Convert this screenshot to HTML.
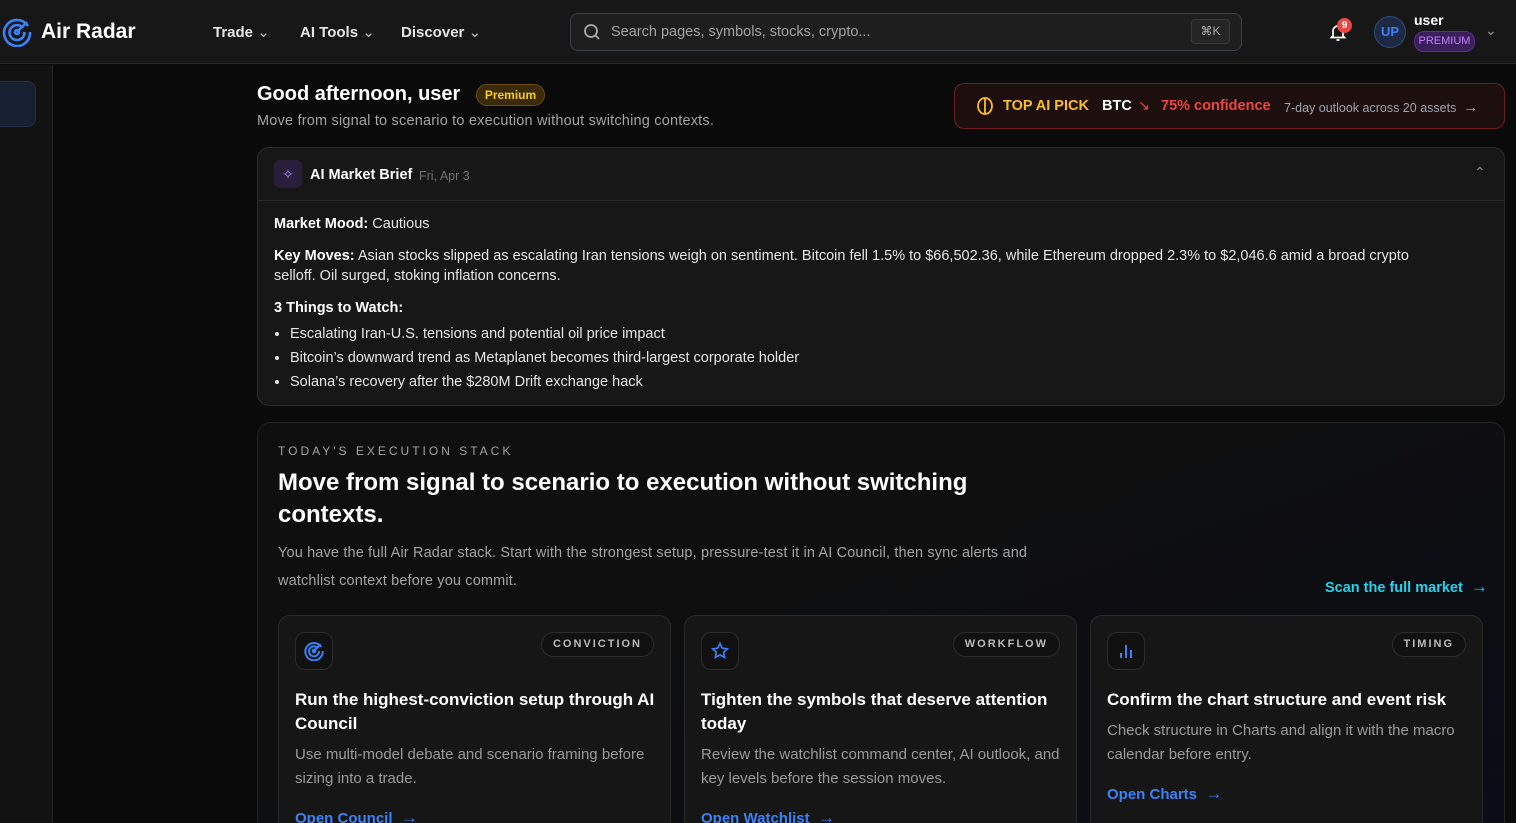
<!DOCTYPE html><html><head><meta charset="utf-8"><style>
*{box-sizing:border-box;margin:0;padding:0}
html{width:1516px;height:823px;overflow:hidden}
body{width:1516px;height:823px;overflow:hidden;background:#0a0a0a;font-family:"Liberation Sans",sans-serif;color:#e5e5e5;position:relative}
.hdr{position:absolute;left:0;top:0;width:1516px;height:64px;background:#171717;border-bottom:1px solid #2a2a2a}
.side{position:absolute;left:0;top:65px;width:53px;height:758px;background:#121212;border-right:1px solid #262626}
.abs{position:absolute}
.nav{position:absolute;top:23px;font-size:15px;color:#e5e5e5;font-weight:bold}
.nav span{font-weight:normal;color:#bbb}
.card{position:absolute;background:#171717;border:1px solid #2a2a2a;border-radius:12px}
.b{font-weight:bold;color:#fff}
.sub{background:#161616;border:1px solid #2a2a2a;border-radius:12px;position:absolute;top:615px;width:393px;height:230px}
.ico{position:absolute;left:16px;top:16px;width:38px;height:38px;border:1px solid #2c2c2c;border-radius:10px;background:#111;display:flex;align-items:center;justify-content:center}
.tag{position:absolute;right:16px;top:16px;height:25px;padding:0 11px;border:1px solid #2c2c2c;border-radius:13px;background:#111;font-size:11px;letter-spacing:2px;font-weight:bold;color:#bbb;line-height:23px}
.sub h3{position:absolute;left:16px;top:72px;font-size:17px;color:#fff;line-height:24px;width:360px}
.sub p{position:absolute;left:16px;font-size:15px;color:#9a9a9a;line-height:24px;width:365px}
.sub a{position:absolute;left:16px;font-size:15px;color:#3b82f6;font-weight:bold}
</style></head><body>
<div class="hdr"></div>
<svg class="abs" style="left:2px;top:17px" width="30" height="30" viewBox="0 0 30 30" fill="none" stroke="#3b82f6" stroke-width="2.6"><path d="M26 9A13 13 0 1 0 28 15"/><path d="M21 11A7.5 7.5 0 1 0 22.5 15"/><circle cx="15" cy="15" r="2"/><path d="M15 15L25 5"/></svg>
<div class="abs b" style="left:41px;top:20px;font-size:21px">Air Radar</div>
<div class="nav" style="left:213px">Trade <span>⌄</span></div>
<div class="nav" style="left:300px">AI Tools <span>⌄</span></div>
<div class="nav" style="left:401px">Discover <span>⌄</span></div>
<div class="abs" style="left:570px;top:13px;width:672px;height:38px;border:1px solid #3a3f4a;border-radius:8px;background:#1e1e1e"></div>
<svg class="abs" style="left:583px;top:23px" width="18" height="18" viewBox="0 0 18 18" fill="none" stroke="#aaa" stroke-width="1.8"><circle cx="8" cy="8" r="6"/><path d="M12.5 12.5L16 16"/></svg>
<div class="abs" style="left:611px;top:24px;font-size:14.5px;color:#a3a3a3">Search pages, symbols, stocks, crypto...</div>
<div class="abs" style="left:1191px;top:19px;width:39px;height:25px;border:1px solid #3a3a3a;border-radius:4px;background:#252525;font-size:12px;color:#aaa;text-align:center;line-height:23px">⌘K</div>
<svg class="abs" style="left:1328px;top:22px" width="20" height="20" viewBox="0 0 20 20" fill="none" stroke="#fff" stroke-width="1.7"><path d="M5 14V9a5 5 0 0 1 10 0v5l1.5 1.5h-13z"/><path d="M8.5 18h3"/></svg>
<div class="abs" style="left:1337px;top:18px;width:15px;height:15px;border-radius:50%;background:#ef4444;color:#fff;font-size:10px;font-weight:bold;text-align:center;line-height:15px">9</div>
<div class="abs" style="left:1374px;top:16px;width:32px;height:32px;border-radius:50%;background:#1e2a44;border:1px solid #2d4a7a;color:#3b82f6;font-size:13px;font-weight:bold;text-align:center;line-height:30px">UP</div>
<div class="abs b" style="left:1414px;top:12px;font-size:14px">user</div>
<div class="abs" style="left:1414px;top:31px;width:61px;height:21px;border-radius:10px;background:#3a1f5c;border:1px solid #5b2f8f;color:#c084fc;font-size:11px;text-align:center;line-height:19px">PREMIUM</div>
<div class="abs" style="left:1485px;top:22px;color:#999;font-size:14px">⌄</div>
<div class="side"></div>
<div class="abs" style="left:-10px;top:81px;width:46px;height:46px;border-radius:8px;background:#172030;border:1px solid #243047"></div>
<div class="abs b" style="left:257px;top:83px;font-size:20px">Good afternoon, user</div>
<div class="abs" style="left:476px;top:84px;width:69px;height:22px;border-radius:11px;background:#3a2a0a;border:1px solid #6b4d10;color:#facc15;font-size:12px;font-weight:bold;text-align:center;line-height:20px">Premium</div>
<div class="abs" style="left:257px;top:113px;font-size:14.5px;color:#a3a3a3;letter-spacing:0.2px">Move from signal to scenario to execution without switching contexts.</div>
<div class="abs" style="left:954px;top:83px;width:551px;height:46px;border:1px solid #6b1f1f;border-radius:10px;background:#1e0f0f"></div>
<svg class="abs" style="left:975px;top:96px" width="20" height="20" viewBox="0 0 20 20" fill="none" stroke="#fbbf24" stroke-width="1.8"><ellipse cx="10" cy="10" rx="7" ry="8"/><path d="M10 2v16"/></svg>
<div class="abs" style="left:1003px;top:98px;font-size:14.5px;font-weight:bold;color:#fbbf24">TOP AI PICK</div>
<div class="abs b" style="left:1102px;top:98px;font-size:14.5px">BTC</div>
<div class="abs" style="left:1138px;top:97px;font-size:14px;color:#ef4444">↘</div>
<div class="abs" style="left:1161px;top:98px;font-size:14.5px;font-weight:bold;color:#ef4444">75% confidence</div>
<div class="abs" style="left:1284px;top:99px;font-size:12.5px;color:#9ca3af">7-day outlook across 20 assets &nbsp;<span style="font-size:15px">→</span></div>
<div class="card" style="left:257px;top:147px;width:1248px;height:259px"></div>
<div class="abs" style="left:257px;top:200px;width:1248px;height:1px;background:#2a2a2a"></div>
<div class="abs" style="left:274px;top:160px;width:28px;height:28px;border-radius:6px;background:#2a1f3a;color:#c084fc;text-align:center;line-height:28px;font-size:14px">✧</div>
<div class="abs b" style="left:310px;top:167px;font-size:14.5px">AI Market Brief</div>
<div class="abs" style="left:419px;top:169px;font-size:12.5px;color:#737373">Fri, Apr 3</div>
<div class="abs" style="left:1474px;top:164px;color:#888;font-size:14px">⌃</div>
<div class="abs" style="left:274px;top:214px;width:1175px;font-size:14.5px;line-height:20px;color:#e5e5e5">
<div style="margin-bottom:12px"><b style="color:#fff">Market Mood:</b> Cautious</div>
<div style="margin-bottom:12px"><b style="color:#fff">Key Moves:</b> Asian stocks slipped as escalating Iran tensions weigh on sentiment. Bitcoin fell 1.5% to $66,502.36, while Ethereum dropped 2.3% to $2,046.6 amid a broad crypto selloff. Oil surged, stoking inflation concerns.</div>
<div style="margin-bottom:4px"><b style="color:#fff">3 Things to Watch:</b></div>
<ul style="padding-left:16px;line-height:24px"><li>Escalating Iran-U.S. tensions and potential oil price impact</li><li>Bitcoin’s downward trend as Metaplanet becomes third-largest corporate holder</li><li>Solana’s recovery after the $280M Drift exchange hack</li></ul>
</div>
<div class="abs" style="left:257px;top:422px;width:1248px;height:420px;border:1px solid #222;border-radius:14px;background:linear-gradient(160deg,#0f0f0f 40%,#0a0d18 100%)"></div>
<div class="abs" style="left:278px;top:444px;font-size:12px;letter-spacing:3px;color:#a3a3a3">TODAY'S EXECUTION STACK</div>
<div class="abs b" style="left:278px;top:467px;width:720px;font-size:24px;line-height:32px">Move from signal to scenario to execution without switching contexts.</div>
<div class="abs" style="left:278px;top:539px;width:780px;font-size:14.5px;line-height:28px;color:#a3a3a3;letter-spacing:0.15px">You have the full Air Radar stack. Start with the strongest setup, pressure-test it in AI Council, then sync alerts and watchlist context before you commit.</div>
<div class="abs" style="left:1325px;top:577px;font-size:14.5px;font-weight:bold;color:#22d3ee">Scan the full market &nbsp;<span style="font-size:17px">→</span></div>
<div class="sub" style="left:278px">
<div class="ico"><svg width="20" height="20" viewBox="0 0 30 30" fill="none" stroke="#3b82f6" stroke-width="3"><path d="M26 9A13 13 0 1 0 28 15"/><path d="M21 11A7.5 7.5 0 1 0 22.5 15"/><circle cx="15" cy="15" r="2"/><path d="M15 15L25 5"/></svg></div>
<div class="tag">CONVICTION</div><h3>Run the highest-conviction setup through AI Council</h3><p style="top:127px">Use multi-model debate and scenario framing before sizing into a trade.</p><a style="top:192px">Open Council &nbsp;<span style="font-size:17px">→</span></a></div>
<div class="sub" style="left:684px">
<div class="ico"><svg width="20" height="20" viewBox="0 0 24 24" fill="none" stroke="#3b82f6" stroke-width="2"><path d="M12 3l2.7 5.6 6.1.8-4.4 4.2 1.1 6.1L12 16.8 6.5 19.7l1.1-6.1L3.2 9.4l6.1-.8z"/></svg></div>
<div class="tag">WORKFLOW</div><h3>Tighten the symbols that deserve attention today</h3><p style="top:127px">Review the watchlist command center, AI outlook, and key levels before the session moves.</p><a style="top:192px">Open Watchlist &nbsp;<span style="font-size:17px">→</span></a></div>
<div class="sub" style="left:1090px">
<div class="ico"><svg width="18" height="18" viewBox="0 0 18 18" stroke="#3b82f6" stroke-width="2"><path d="M4 16v-5M9 16V3M14 16V8"/></svg></div>
<div class="tag">TIMING</div><h3>Confirm the chart structure and event risk</h3><p style="top:103px">Check structure in Charts and align it with the macro calendar before entry.</p><a style="top:168px">Open Charts &nbsp;<span style="font-size:17px">→</span></a></div>
</body></html>
